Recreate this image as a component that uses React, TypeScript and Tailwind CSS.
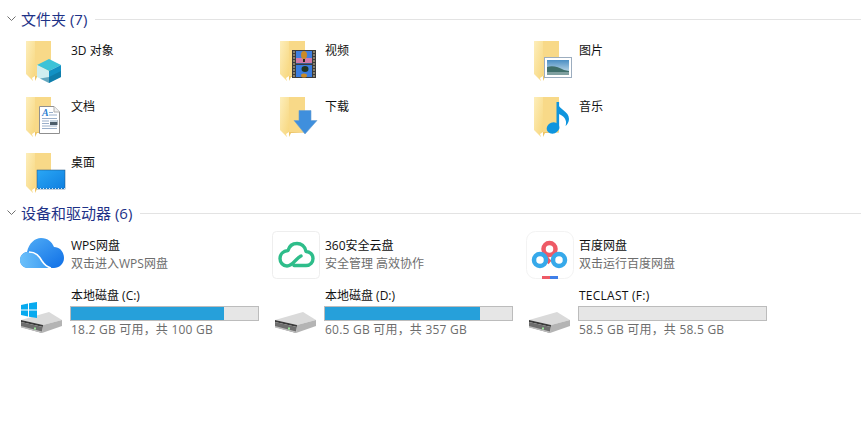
import React from "react";

const font = { fontFamily: '"Open Sans", "Noto Sans CJK SC", sans-serif' };

function Folder({ id }: { id: string }) {
  return (
    <g>
      <defs>
        <linearGradient id={id} x1="0" y1="0" x2="1" y2="1">
          <stop offset="0" stopColor="#fdeebb" />
          <stop offset="1" stopColor="#f7d67c" />
        </linearGradient>
      </defs>
      <rect x="13" y="7" width="20" height="35" fill="#f8d988" />
      <path d="M8 7H17V47L15 47L8 40Z" fill={`url(#${id})`} />
      <path d="M17 47L17 42H33V42.5L19 43Z" fill="#eec566" />
      <path d="M14 44L17 42V47L15 47Z" fill="#ffffff" />
    </g>
  );
}

function Box({ w, h, children }: { w: number; h: number; children: React.ReactNode }) {
  return (
    <svg width={w} height={h} viewBox={`0 0 ${w} ${h}`} className="shrink-0 overflow-visible">
      {children}
    </svg>
  );
}

const cube = (
  <g>
    <path d="M31 25L43 31L31 37L19 31Z" fill="#3cc3d8" />
    <path d="M19 31L31 37V49L19 43Z" fill="#cfeef0" />
    <path d="M43 31L31 37V49L43 43Z" fill="#1291c4" />
    <path d="M31 43L43 37V43L31 49L22 44.5Z" fill="#0c6f98" opacity="0.55" />
  </g>
);

const film = (
  <g>
    <rect x="20" y="16" width="24" height="28" fill="#3b3b3b" />
    <rect x="24" y="17" width="16" height="12.5" fill="#3f7fe0" />
    <rect x="24" y="24" width="16" height="5" fill="#d07aa8" />
    <rect x="24" y="31" width="16" height="12" fill="#3a7de0" />
    <ellipse cx="32" cy="21" rx="3" ry="4" fill="#c98a28" />
    <rect x="31" y="25" width="2" height="3" fill="#2a2a1a" />
    <ellipse cx="33" cy="35" rx="3.5" ry="3" fill="#23351f" />
    <ellipse cx="32" cy="41.5" rx="3" ry="2" fill="#c98a28" />
    <path d="M21 18h2M21 21h2M21 24h2M21 27h2M21 30h2M21 33h2M21 36h2M21 39h2M21 42h2M41 18h2M41 21h2M41 24h2M41 27h2M41 30h2M41 33h2M41 36h2M41 39h2M41 42h2" stroke="#d8c9a0" strokeWidth="1.2" />
  </g>
);

const picture = (
  <g>
    <defs>
      <linearGradient id="sky" x1="0" y1="0" x2="0" y2="1">
        <stop offset="0" stopColor="#4a8ec4" />
        <stop offset="1" stopColor="#d7e8ee" />
      </linearGradient>
    </defs>
    <rect x="18.5" y="23.5" width="27" height="20" fill="#fff" stroke="#9cadbf" />
    <rect x="21" y="26" width="22" height="15" fill="url(#sky)" />
    <path d="M21 33C27 31 32 33 38 36L43 37V41H21Z" fill="#3f6f6a" />
    <path d="M21 38H43V41H21Z" fill="#7fa0a0" />
  </g>
);

const doc = (
  <g>
    <path d="M21.5 16.5H36L41.5 22V43.5H21.5Z" fill="#fff" stroke="#8f8f8f" />
    <path d="M36 16.5V22H41.5" fill="#f0f0f0" stroke="#b0b0b0" />
    <text x="24" y="26" fontSize="10" fontStyle="italic" fontWeight="700" fill="#2f7fd0" fontFamily="Liberation Serif, serif">A</text>
    <path d="M31 22.5h4M31 25h8M24 28.5h15M24 31h7M24 33.5h7M24 36h15M24 38.5h15" stroke="#8fa6c4" strokeWidth="0.9" />
    <rect x="32" y="30" width="7.5" height="5" fill="#4c5d6b" />
    <rect x="32" y="30" width="7.5" height="2" fill="#c8d6e2" />
  </g>
);

const arrow = (
  <path d="M27 20.5H39V30.5H45L33 44L22 30.5H27Z" fill="#3f8fdd" stroke="#6a9fd0" strokeWidth="0.6" />
);

const note = (
  <g fill="#0f95de">
    <ellipse cx="27" cy="38" rx="6.5" ry="5.5" transform="rotate(-20 27 38)" />
    <rect x="30.5" y="12" width="2.6" height="27" />
    <path d="M31 12C33 20 43 21 43 29C43 32 41 35 39.5 36C41 32 40 27 33 24Z" />
  </g>
);

const desktop = (
  <g>
    <defs>
      <linearGradient id="desk" x1="0" y1="0" x2="1" y2="1">
        <stop offset="0" stopColor="#2aa7f5" />
        <stop offset="1" stopColor="#0f7fe0" />
      </linearGradient>
    </defs>
    <rect x="19" y="24" width="28" height="19" fill="url(#desk)" stroke="#1d4e78" strokeWidth="0.5" />
    <path d="M19 42.5H47" stroke="#cfe6f7" strokeDasharray="1 2" />
  </g>
);

const wps = (
  <g>
    <defs>
      <linearGradient id="wpsA" x1="0" y1="0" x2="1" y2="1">
        <stop offset="0" stopColor="#54b0f7" />
        <stop offset="1" stopColor="#0f6fe6" />
      </linearGradient>
      <linearGradient id="wpsB" x1="0" y1="0" x2="1" y2="0">
        <stop offset="0" stopColor="#6cc0fa" />
        <stop offset="1" stopColor="#3a9af2" />
      </linearGradient>
    </defs>
    <path d="M10 39C5 39 2 35 2 31C2 27 5 23 9 23C11 14 17 9 23 9C30 9 34 13 36 18C42 18 46 23 46 29C46 35 41 39 36 39Z" fill="url(#wpsA)" />
    <path d="M2 31C2 26 6 23 11 23C18 23 21 27 24 32C26 35 29 38 33 39H10C5 39 2 35 2 31Z" fill="url(#wpsB)" />
    <path d="M11 23C18 23 21 27 24 32C26 35 29 38 33 39" fill="none" stroke="#fff" strokeWidth="1.6" />
  </g>
);

const s360 = (
  <g>
    <rect x="0.5" y="2.5" width="47" height="47" rx="4" fill="#fff" stroke="#eeeeee" />
    <path d="M22 36.5H34C38.5 36.5 41 33 41 29.5C41 25.5 38 22.5 34 22.5C33 17 29 14.5 25 14.5C20 14.5 17 18 16 21.5C11 22 8 25.5 8 29.5C8 33.5 11 37 15 37C21 37 24 29 29 27"
      fill="none" stroke="#2ebd8a" strokeWidth="3.4" strokeLinecap="round" strokeLinejoin="round" />
  </g>
);

const baidu = (
  <g>
    <rect x="0.5" y="2.5" width="47" height="47" rx="9" fill="#fff" stroke="#f3f3f3" />
    <path d="M18.5 24C19.5 28 21 31 24 33.5" fill="none" stroke="#ee5a66" strokeWidth="4.5" />
    <circle cx="23.5" cy="20" r="6" fill="none" stroke="#ee5a66" strokeWidth="4.5" />
    <circle cx="14" cy="31" r="6" fill="none" stroke="#36a9ea" strokeWidth="4.5" />
    <circle cx="33" cy="31" r="6" fill="none" stroke="#36a9ea" strokeWidth="4.5" />
    <rect x="16" y="47" width="8" height="3" fill="#ee5a66" />
    <rect x="24" y="47" width="8" height="3" fill="#3f7fe8" />
  </g>
);

const drive = (
  <g>
    <path d="M3 40L31 32L44 40L25 45Z" fill="#dadada" />
    <path d="M3 40L25 45V47L3 42Z" fill="#3a3a3a" />
    <path d="M3 42L25 47L24 53L3 47Z" fill="#6e6e6e" />
    <path d="M3 46L24 51.5V53L3 47.5Z" fill="#bdbdbd" />
    <path d="M25 45L44 40V46L24 53Z" fill="#b4b4b4" />
    <rect x="16" y="47.5" width="2" height="2" fill="#9be79b" />
  </g>
);

const winLogo = (
  <g fill="#08aaef">
    <path d="M3 25L10 23.5V29.5H3Z" />
    <path d="M11 23.2L19 22V29.5H11Z" />
    <path d="M3 30.5H10V36.5L3 35Z" />
    <path d="M11 30.5H19V38L11 36.7Z" />
  </g>
);

function Section({ title }: { title: string }) {
  return (
    <div className="flex h-5 items-center pr-[7px] pl-[7px]">
      <svg width="9" height="6" viewBox="0 0 9 6" className="shrink-0">
        <path d="M0.5 0.5L4.5 4.5L8.5 0.5" fill="none" stroke="#707070" />
      </svg>
      <span className="ml-[5px] text-[15px] leading-5 whitespace-nowrap text-[#1e3287]">{title}</span>
      <div className="ml-2 h-px flex-1 bg-[#e3e3e3]" />
    </div>
  );
}

function FolderItem({ id, name, children }: { id: string; name: string; children: React.ReactNode }) {
  return (
    <div className="flex h-14 w-[254px] gap-px">
      <Box w={52} h={56}>
        <Folder id={id} />
        {children}
      </Box>
      <div className="pt-2 text-xs leading-[18px] text-[#111111]">{name}</div>
    </div>
  );
}

function AppItem({ name, sub, children }: { name: string; sub: string; children: React.ReactNode }) {
  return (
    <div className="flex h-[51px] w-[254px] gap-px">
      <Box w={52} h={51}>{children}</Box>
      <div className="pt-2 text-xs leading-[18px]">
        <div className="text-[#111111]">{name}</div>
        <div className="text-[#6d6d6d]">{sub}</div>
      </div>
    </div>
  );
}

function DriveItem({ name, used, info, win, wide }: { name: string; used: number; info: string; win?: boolean; wide?: boolean }) {
  return (
    <div className="flex h-14 w-[254px] gap-px">
      <Box w={52} h={56}>
        {drive}
        {win && winLogo}
      </Box>
      <div className="pt-[7px] text-xs leading-[18px]">
        <div className={wide ? "tracking-[0.25px] text-[#111111]" : "text-[#111111]"}>{name}</div>
        <div className="mt-px -ml-px h-[15px] w-[189px] border border-[#bcbcbc] bg-[#e6e6e6]">
          <div className="h-full bg-[#26a0da]" style={{ width: `${used}%` }} />
        </div>
        <div className="tracking-[0.22px] text-[#6d6d6d]">{info}</div>
      </div>
    </div>
  );
}

export default function App() {
  return (
    <div className="h-[446px] w-full overflow-hidden bg-white pt-[9px]" style={font}>
      <Section title="文件夹 (7)" />
      <div className="mt-[5px] grid grid-cols-[254px_254px_254px] pl-[18px]">
        <FolderItem id="f1" name="3D 对象">{cube}</FolderItem>
        <FolderItem id="f2" name="视频">{film}</FolderItem>
        <FolderItem id="f3" name="图片">{picture}</FolderItem>
        <FolderItem id="f4" name="文档">{doc}</FolderItem>
        <FolderItem id="f5" name="下载">{arrow}</FolderItem>
        <FolderItem id="f6" name="音乐">{note}</FolderItem>
        <FolderItem id="f7" name="桌面">{desktop}</FolderItem>
      </div>
      <div className="mt-px">
        <Section title="设备和驱动器 (6)" />
      </div>
      <div className="mt-1.5 grid grid-cols-[254px_254px_254px] pl-[18px]">
        <AppItem name="WPS网盘" sub="双击进入WPS网盘">{wps}</AppItem>
        <AppItem name="360安全云盘" sub="安全管理 高效协作">{s360}</AppItem>
        <AppItem name="百度网盘" sub="双击运行百度网盘">{baidu}</AppItem>
        <DriveItem name="本地磁盘 (C:)" used={81.8} info="18.2 GB 可用，共 100 GB" win />
        <DriveItem name="本地磁盘 (D:)" used={83} info="60.5 GB 可用，共 357 GB" />
        <DriveItem name="TECLAST (F:)" used={0} info="58.5 GB 可用，共 58.5 GB" wide />
      </div>
    </div>
  );
}
